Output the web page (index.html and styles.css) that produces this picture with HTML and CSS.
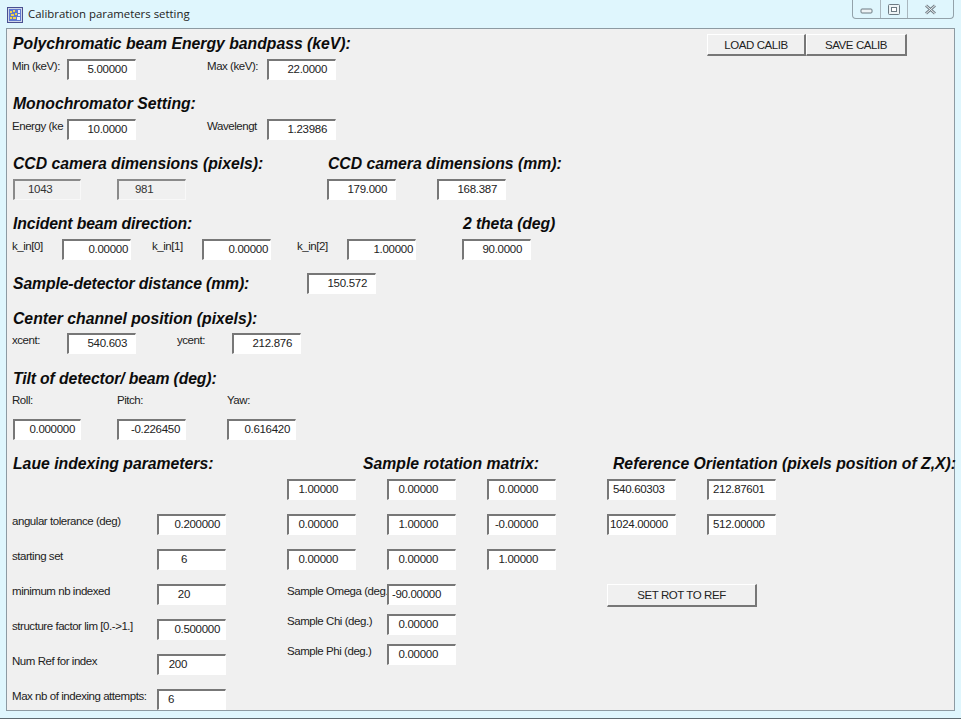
FILE: index.html
```html
<!DOCTYPE html>
<html lang="en">
<head>
  <meta charset="UTF-8">
  <title>Calibration parameters setting</title>
  <link rel="stylesheet" href="styles.css">
</head>
<body>

  <div class="window">
    <div class="titlebar">
      <svg class="app-icon" width="16" height="16" viewBox="0 0 16 16">
        <rect x="0.5" y="0.5" width="15" height="15" fill="#cfd6e8" stroke="#4a5090"/>
        <rect x="2" y="2" width="12" height="12" fill="#5f78cf"/>
        <path d="M3 4h2v2H3zM6 3h2v2H6zM4 7h3v2H4zM8 6h2v2H8zM6 10h3v2H6zM3 10h2v2H3z" fill="#f2d24a"/>
        <path d="M11 3h2v3h-2zM11 7h2v2h-2zM10 10h3v3h-3z" fill="#e8ecf5"/>
      </svg>
      <span class="title-text">Calibration parameters setting</span>
      <div class="win-controls">
        <div class="win-btn btn-min">
          <svg width="13" height="6" viewBox="0 0 13 6"><rect x="1" y="1" width="11" height="4" rx="1" fill="#eef3f5" stroke="#6d7a82"/></svg>
        </div>
        <div class="win-btn btn-max">
          <svg width="12" height="11" viewBox="0 0 12 11"><rect x="0.5" y="0.5" width="11" height="10" rx="1" fill="#eef3f5" stroke="#6d7a82"/><rect x="3.5" y="3.5" width="5" height="4" fill="#fff" stroke="#6d7a82"/></svg>
        </div>
        <div class="win-btn btn-close">
          <svg width="13" height="11" viewBox="0 0 13 11"><path d="M2 1.5l9 8M11 1.5l-9 8" fill="none" stroke="#75828a" stroke-width="3"/><path d="M2 1.5l9 8M11 1.5l-9 8" fill="none" stroke="#eef3f5" stroke-width="1"/></svg>
        </div>
      </div>
    </div>

    <div class="panel">

      <div class="top-row">
        <h3>Polychromatic beam Energy bandpass (keV):</h3>
        <div class="calib-buttons">
          <button class="btn w-load">LOAD CALIB</button>
          <button class="btn w-save">SAVE CALIB</button>
        </div>
      </div>
      <div class="row after-h">
        <label class="lbl w55">Min (keV):</label>
        <div class="field">5.00000</div>
        <label class="lbl w60 ml71">Max (keV):</label>
        <div class="field">22.0000</div>
      </div>

      <h3 class="sec">Monochromator Setting:</h3>
      <div class="row after-h">
        <label class="lbl w55">Energy (ke</label>
        <div class="field">10.0000</div>
        <label class="lbl w60 ml71">Wavelengt</label>
        <div class="field">1.23986</div>
      </div>

      <div class="row sec">
        <h3 class="w315">CCD camera dimensions (pixels):</h3>
        <h3>CCD camera dimensions (mm):</h3>
      </div>
      <div class="row after-h">
        <div class="field readonly first l15">1043</div>
        <div class="field readonly ml36 l18">981</div>
        <div class="field ml141">179.000</div>
        <div class="field ml41">168.387</div>
      </div>

      <div class="row sec">
        <h3 class="w450 condensed">Incident beam direction:</h3>
        <h3 class="condensed">2 theta (deg)</h3>
      </div>
      <div class="row after-h">
        <label class="lbl w50">k_in[0]</label>
        <div class="field r3">0.00000</div>
        <label class="lbl w50 ml21">k_in[1]</label>
        <div class="field r3">0.00000</div>
        <label class="lbl w50 ml26">k_in[2]</label>
        <div class="field r3">1.00000</div>
        <div class="field ml46">90.0000</div>
      </div>

      <div class="row sec">
        <h3 class="w295 condensed">Sample-detector distance (mm):</h3>
        <div class="field">150.572</div>
      </div>

      <h3 class="sec14">Center channel position (pixels):</h3>
      <div class="row after-h2">
        <label class="lbl w55">xcent:</label>
        <div class="field">540.603</div>
        <label class="lbl w55 ml41">ycent:</label>
        <div class="field">212.876</div>
      </div>

      <h3 class="sec14 condensed">Tilt of detector/ beam (deg):</h3>
      <div class="row tilt-labels">
        <label class="lbl w105">Roll:</label>
        <label class="lbl w110">Pitch:</label>
        <label class="lbl">Yaw:</label>
      </div>
      <div class="row tilt-fields">
        <div class="field first r6">0.000000</div>
        <div class="field r6 ml36">-0.226450</div>
        <div class="field r6 ml41">0.616420</div>
      </div>

      <div class="row sec">
        <h3 class="w350">Laue indexing parameters:</h3>
        <h3 class="w250">Sample rotation matrix:</h3>
        <h3>Reference Orientation (pixels position of Z,X):</h3>
      </div>

      <div class="lower">
        <div class="col col-laue">
          <div class="row"><label class="lbl w145">angular tolerance (deg)</label><div class="field r6">0.200000</div></div>
          <div class="row"><label class="lbl w145">starting set</label><div class="field r39">6</div></div>
          <div class="row"><label class="lbl w145">minimum nb indexed</label><div class="field r36">20</div></div>
          <div class="row"><label class="lbl w145">structure factor lim [0.-&gt;1.]</label><div class="field r6">0.500000</div></div>
          <div class="row"><label class="lbl w145">Num Ref for index</label><div class="field r39">200</div></div>
          <div class="row"><label class="lbl w145">Max nb of indexing attempts:</label><div class="field r52">6</div></div>
        </div>

        <div class="col col-matrix">
          <div class="row"><div class="field r18">1.00000</div><div class="field r18 ml31">0.00000</div><div class="field r18 ml31">0.00000</div></div>
          <div class="row"><div class="field r18">0.00000</div><div class="field r18 ml31">1.00000</div><div class="field r18 ml31">-0.00000</div></div>
          <div class="row"><div class="field r18">0.00000</div><div class="field r18 ml31">0.00000</div><div class="field r18 ml31">1.00000</div></div>
          <div class="row"><label class="lbl w100">Sample Omega (deg.)</label><div class="field r15">-90.00000</div></div>
          <div class="row tight"><label class="lbl w100">Sample Chi (deg.)</label><div class="field r18">0.00000</div></div>
          <div class="row tight"><label class="lbl w100">Sample Phi (deg.)</label><div class="field r18">0.00000</div></div>
        </div>

        <div class="col col-ref">
          <div class="row"><div class="field l5">540.60303</div><div class="field l5 ml31">212.87601</div></div>
          <div class="row"><div class="field l2">1024.00000</div><div class="field l5 ml31">512.00000</div></div>
          <button class="btn w-set">SET ROT TO REF</button>
        </div>
      </div>

    </div>
  </div>

</body>
</html>
```

FILE: styles.css
```css
html, body {
  margin: 0;
  padding: 0;
  height: 719px;
  overflow: hidden;
}

body {
  font-family: "Liberation Sans", Arial, sans-serif;
  font-size: 11.5px;
  letter-spacing: -0.45px;
  color: #1a1a1a;
}

.window {
  width: 961px;
  height: 719px;
  box-sizing: border-box;
  background: #dff6fd;
  display: flex;
  flex-direction: column;
  padding-bottom: 7px;
  border-bottom: 1px solid #5e6a70;
}

/* title bar */
.titlebar {
  height: 28px;
  flex: none;
  display: flex;
  align-items: flex-start;
  padding-left: 7px;
  padding-right: 7px;
  box-sizing: border-box;
}

.app-icon {
  margin-top: 7px;
  flex: none;
}

.title-text {
  font-family: "Open Sans", sans-serif;
  font-size: 11.4px;
  letter-spacing: 0;
  line-height: 16px;
  margin: 6px 0 0 5px;
  color: #222;
}

.win-controls {
  margin-left: auto;
  display: flex;
  height: 19px;
  box-sizing: border-box;
  border: 1px solid #93a2aa;
  border-top: none;
  border-radius: 0 0 4px 4px;
}

.win-btn {
  display: flex;
  align-items: center;
  justify-content: center;
  box-sizing: border-box;
  border-right: 1px solid #a9b7be;
}

.btn-min { width: 28px; padding-top: 4px; }
.btn-max { width: 27px; }
.btn-close { width: 45px; border-right: none; }

/* client area */
.panel {
  flex: 1;
  margin: 0 6px 0 6px;
  background: #f0f0f0;
  border: 1px solid #8d9aa2;
  padding: 4px 0 0 5px;
  min-height: 0;
}

h3 {
  margin: 0;
  flex: none;
  box-sizing: border-box;
  padding-left: 1px;
  font-size: 15.75px;
  letter-spacing: 0;
  line-height: 22px;
  height: 20px;
  font-style: italic;
  font-weight: bold;
  color: #0c0c0c;
  white-space: nowrap;
}

h3.condensed { letter-spacing: -0.12px; }

.top-row {
  display: flex;
  justify-content: space-between;
  align-items: flex-start;
  height: 20px;
  padding-right: 47px;
}

.calib-buttons {
  display: flex;
  margin-top: 1px;
}

.row {
  display: flex;
  align-items: flex-start;
}

.sec { margin-top: 13px; }
.sec14 { margin-top: 14px; }
.after-h { margin-top: 6px; }
.after-h2 { margin-top: 5px; }
.tilt-labels { margin-top: 5px; height: 14px; }
.tilt-fields { margin-top: 12px; }

.lbl {
  display: block;
  flex: none;
  line-height: 14px;
  height: 14px;
  white-space: nowrap;
  color: #222;
}

.field {
  flex: none;
  width: 69px;
  height: 21px;
  box-sizing: border-box;
  background: #fff;
  border: 2px solid;
  border-color: #777 #fff #fff #777;
  border-right-width: 1px;
  border-bottom-width: 1px;
  font-size: 11.5px;
  letter-spacing: -0.3px;
  line-height: 16px;
  text-align: right;
  padding-right: 8px;
  color: #222;
  white-space: nowrap;
}

.first {
  width: 68px;
  margin-left: 1px;
}

.readonly {
  background: #f0f0f0;
  text-align: left;
  color: #333;
  border-color: #8a8a8a #f8f8f8 #f8f8f8 #8a8a8a;
}

.btn {
  font-family: inherit;
  font-size: 11.5px;
  letter-spacing: -0.42px;
  color: #222;
  background: #f0f0f0;
  height: 22px;
  padding: 0;
  box-sizing: border-box;
  border: 1px solid;
  border-color: #fff #777 #777 #fff;
  border-bottom-width: 2px;
  border-right-width: 2px;
}

.w-load { width: 99px; }
.w-save { width: 101px; }
.w-set { width: 150px; height: 23px; }

/* lower three columns */
.lower {
  display: flex;
  align-items: flex-start;
  margin-top: 6px;
}

.col {
  display: flex;
  flex-direction: column;
  gap: 14px;
}

.col-laue { width: 275px; padding-top: 35px; flex: none; }
.col-matrix { width: 320px; flex: none; }
.col-ref { flex: none; }
.col-ref .w-set { margin-top: 35px; }

.tight { margin-top: -5px; }

/* label widths and spacers */
.w50 { width: 50px; }
.w55 { width: 55px; }
.w60 { width: 60px; }
.w100 { width: 100px; }
.w105 { width: 105px; }
.w110 { width: 110px; }
.w145 { width: 145px; }
.w250 { width: 250px; }
.w295 { width: 295px; }
.w315 { width: 315px; }
.w350 { width: 350px; }
.w450 { width: 450px; }

.ml21 { margin-left: 21px; }
.ml26 { margin-left: 26px; }
.ml31 { margin-left: 31px; }
.ml36 { margin-left: 36px; }
.ml41 { margin-left: 41px; }
.ml46 { margin-left: 46px; }
.ml71 { margin-left: 71px; }
.ml141 { margin-left: 141px; }

/* value positions inside the boxes */
.r3 { padding-right: 2px; }
.r6 { padding-right: 5px; }
.r15 { padding-right: 14px; }
.r18 { padding-right: 17px; }
.r36 { padding-right: 35px; }
.r39 { padding-right: 38px; }
.r52 { padding-right: 51px; }
.l2 { text-align: left; padding-left: 1px; padding-right: 0; }
.l5 { text-align: left; padding-left: 4px; padding-right: 0; }
.l15 { padding-left: 13px; padding-right: 0; }
.l18 { padding-left: 16px; padding-right: 0; }
```
